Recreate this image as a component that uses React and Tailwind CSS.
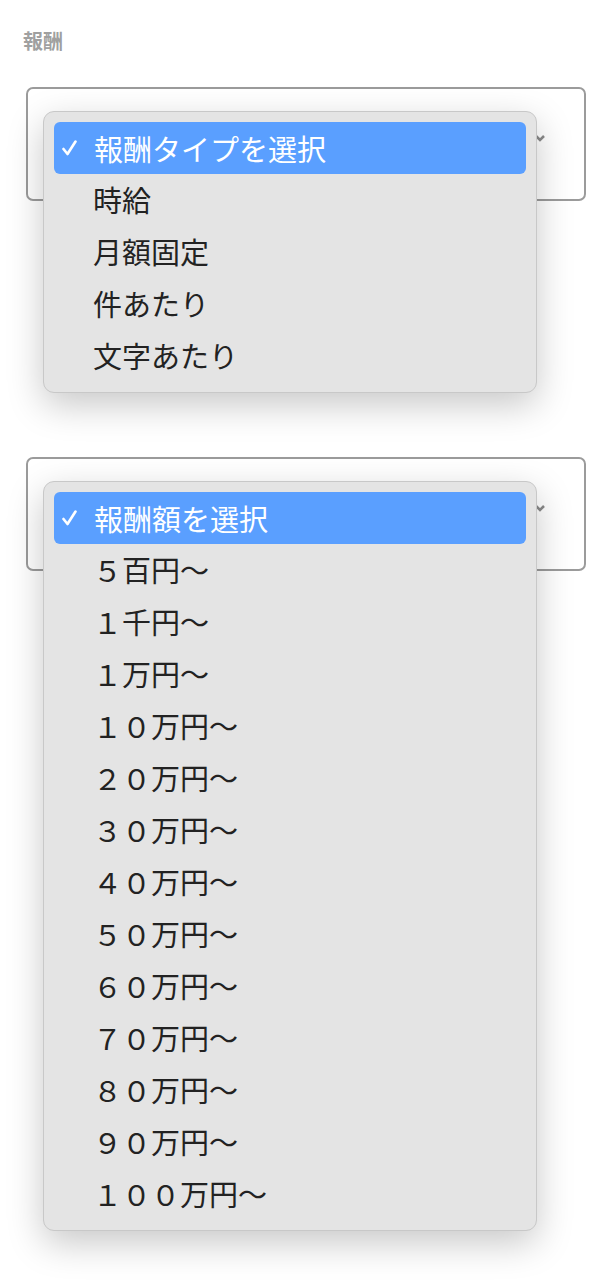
import React from 'react';

const font = { fontFamily: '"Noto Sans CJK JP", "Noto Sans", sans-serif' };

const typeOptions = ['時給', '月額固定', '件あたり', '文字あたり'];
const amountOptions = [
    '５百円〜', '１千円〜', '１万円〜', '１０万円〜', '２０万円〜', '３０万円〜', '４０万円〜',
    '５０万円〜', '６０万円〜', '７０万円〜', '８０万円〜', '９０万円〜', '１００万円〜',
];

const OpenSelect = ({ placeholder, options, className }) => {
    return (
        <div className={`relative h-[114px] rounded-[7px] border-2 border-[#9b9b9b] bg-white ${className}`}>
            <svg className="absolute left-[506px] top-[43px]" width="12" height="12" viewBox="0 0 12 12">
                <path d="M2 4 L6 8 L10 4" fill="none" stroke="#8a8a8a" strokeWidth="2.5" />
            </svg>
            <div className="absolute left-[15px] top-[22px] w-[494px] rounded-[11px] border border-[#c8c8c8] bg-[#e4e4e4] p-[10px] shadow-[0_12px_36px_rgba(0,0,0,0.22)]">
                <div className="flex h-[52px] items-center rounded-[6px] bg-[#5a9fff] pl-[8px] text-[29px] text-white">
                    <svg className="mr-[17px]" width="15" height="16" viewBox="0 0 15 16">
                        <path d="M1.5 9 L5.5 14 L13.5 1.5" fill="none" stroke="white" strokeWidth="2.6" strokeLinecap="round" strokeLinejoin="round" />
                    </svg>
                    <span className="leading-none">{placeholder}</span>
                </div>
                {options.map((opt) => (
                    <div key={opt} className="flex h-[52px] items-center pl-[39px] text-[29px] text-[#222]">
                        {opt}
                    </div>
                ))}
            </div>
        </div>
    );
};

const App = () => {
    return (
        <div className="min-h-[1280px] bg-white pl-[26px] pr-[24px] pt-[26px]" style={font}>
            <h2 className="-ml-[3px] text-[20px] font-bold leading-[30px] text-[#a0a0a0]">報酬</h2>
            <OpenSelect className="mt-[31px]" placeholder="報酬タイプを選択" options={typeOptions} />
            <OpenSelect className="mt-[256px]" placeholder="報酬額を選択" options={amountOptions} />
        </div>
    );
};

export default App;
